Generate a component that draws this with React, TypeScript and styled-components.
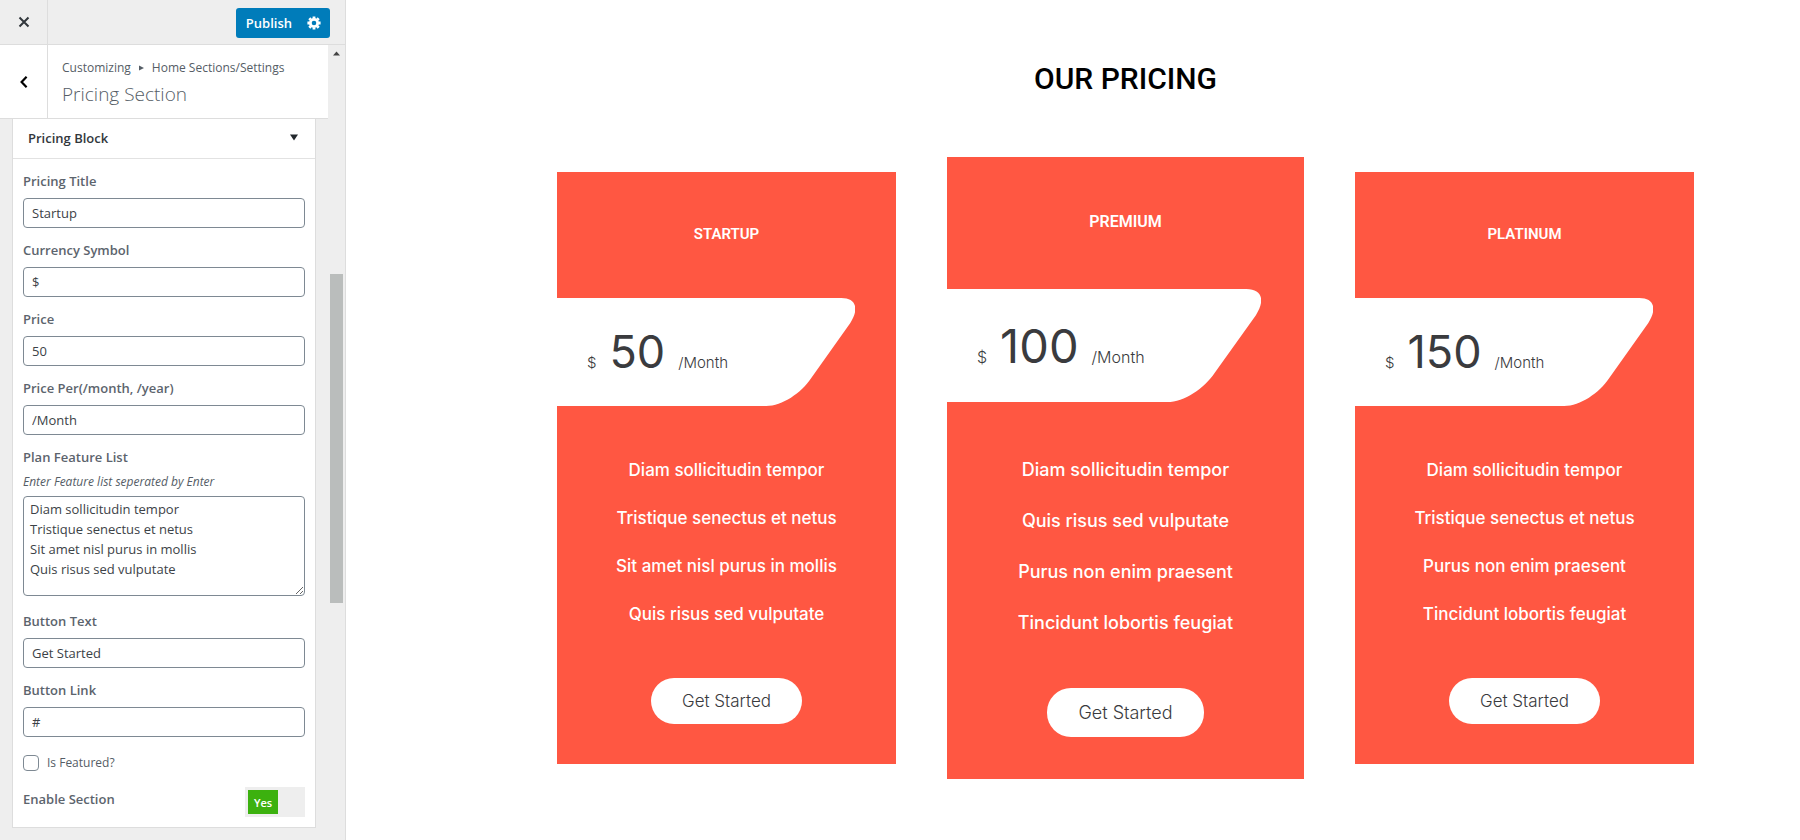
import React, { useState } from 'react';
import styled, { createGlobalStyle, css } from 'styled-components';

const GlobalStyle = createGlobalStyle`
  *, *::before, *::after { box-sizing: border-box; }
  body { margin: 0; background: #fff; }
  button, input, textarea { font: inherit; }
`;

const Page = styled.div`
  display: flex;
  min-height: 100vh;
`;

const Sidebar = styled.aside`
  flex: 0 0 346px;
  display: flex;
  flex-direction: column;
  background: #eee;
  border-right: 1px solid #ddd;
  font-family: 'Open Sans', 'Noto Sans', sans-serif;
  font-size: 13px;
  color: #555d66;
`;

const TopBar = styled.header`
  display: flex;
  align-items: center;
  justify-content: space-between;
  height: 45px;
  padding-right: 15px;
  border-bottom: 1px solid #ddd;
`;

const IconButton = styled.button`
  display: flex;
  align-items: center;
  justify-content: center;
  align-self: stretch;
  width: 48px;
  padding: 0;
  border: 0;
  border-right: 1px solid #ddd;
  background: transparent;
  color: #32373c;
  cursor: pointer;
`;

const PublishGroup = styled.div`
  display: flex;
  height: 30px;
  margin-top: 1px;
  border-radius: 3px;
  overflow: hidden;
  background: #007cba;
`;

const PublishButton = styled.button`
  display: flex;
  align-items: center;
  border: 0;
  padding: 0 9px 0 10px;
  background: transparent;
  color: #fff;
  font-weight: 600;
  cursor: pointer;
`;

const GearButton = styled(PublishButton)`
  padding: 0 9px 0 6px;
`;

const SidebarBody = styled.div`
  flex: 1;
  display: flex;
`;

const SidebarMain = styled.div`
  flex: 1;
  min-width: 0;
`;

const SectionHead = styled.div`
  display: flex;
  height: 74px;
  background: #fff;
  border-bottom: 1px solid #ddd;
`;

const HeadText = styled.div`
  display: flex;
  flex-direction: column;
  justify-content: center;
  padding: 2px 0 0 14px;
`;

const Crumbs = styled.div`
  display: flex;
  align-items: center;
  gap: 8px;
  font-size: 12px;
  line-height: 20px;
`;

const HeadTitle = styled.h1`
  margin: 2px 0 0;
  font-size: 19px;
  font-weight: 300;
  line-height: 28px;
`;

const Panel = styled.section`
  margin: 0 12px 12px;
  border: 1px solid #ddd;
  border-top: 0;
  background: #fff;
`;

const PanelToggle = styled.button`
  display: flex;
  align-items: center;
  justify-content: space-between;
  width: 100%;
  height: 40px;
  padding: 0 17px 2px 15px;
  border: 0;
  border-bottom: 1px solid #e2e2e2;
  background: #fff;
  color: #32373c;
  font-weight: 600;
  cursor: pointer;
`;

const Fields = styled.div`
  display: flex;
  flex-direction: column;
  gap: 12px;
  padding: 12px 10px 10px;
`;

const Field = styled.div<{ $roomy?: boolean }>`
  display: flex;
  flex-direction: column;
  padding-bottom: ${p => (p.$roomy ? 3 : 0)}px;
`;

const labelText = css`
  font-weight: 600;
  line-height: 20px;
  color: #5c646d;
`;

const Label = styled.label`
  ${labelText}
`;

const Hint = styled.span`
  margin-top: 5px;
  font-size: 12px;
  font-style: italic;
  line-height: 20px;
`;

const inputBox = css`
  width: 100%;
  border: 1px solid #7e8993;
  border-radius: 4px;
  background: #fff;
  color: #3c4247;
`;

const TextInput = styled.input`
  ${inputBox}
  height: 30px;
  margin-top: 7px;
  padding: 0 8px;
`;

const TextArea = styled.textarea`
  ${inputBox}
  display: block;
  height: 100px;
  margin-top: 4px;
  padding: 2px 6px;
  line-height: 20px;
  resize: vertical;
`;

const CheckRow = styled.label`
  display: flex;
  align-items: center;
  gap: 8px;
  padding: 3px 0 1px;
  font-size: 12px;
  line-height: 22px;
`;

const CheckBox = styled.input`
  appearance: none;
  width: 16px;
  height: 16px;
  margin: 0;
  border: 1px solid #7e8993;
  border-radius: 4px;
  background: #fff;
  &:checked { background: #007cba; }
`;

const SwitchRow = styled.div`
  display: flex;
  align-items: center;
  justify-content: space-between;
`;

const SwitchLabel = styled.label`
  ${labelText}
  padding-bottom: 6px;
`;

const Switch = styled.span<{ $on: boolean }>`
  position: relative;
  display: flex;
  justify-content: ${p => (p.$on ? 'flex-start' : 'flex-end')};
  width: 60px;
  height: 30px;
  padding: 3px;
  background: #eee;
`;

const SwitchInput = styled.input`
  position: absolute;
  inset: 0;
  width: 100%;
  height: 100%;
  margin: 0;
  appearance: none;
  cursor: pointer;
`;

const Knob = styled.span<{ $on: boolean }>`
  width: 30px;
  background: ${p => (p.$on ? '#3cb10f' : '#999')};
  color: #fff;
  font-size: 11px;
  font-weight: 600;
  line-height: 25px;
  text-align: center;
`;

const ScrollRail = styled.div`
  flex: 0 0 17px;
  display: flex;
  flex-direction: column;
  align-items: center;
  padding: 6px 2px 0;
`;

const ScrollThumb = styled.div`
  width: 13px;
  flex: 0 0 329px;
  margin-top: 218px;
  background: #babdbc;
`;

const Preview = styled.main`
  flex: 1;
  min-width: 0;
  padding: 58px 106px 40px 211px;
  font-family: Inter, 'Open Sans', sans-serif;
`;

const PreviewTitle = styled.h2`
  margin: 0 0 58px;
  font-family: Roboto, sans-serif;
  font-size: 30px;
  font-weight: 500;
  line-height: 41px;
  text-align: center;
  text-transform: uppercase;
  color: #000;
`;

const Cards = styled.div`
  display: grid;
  grid-template-columns: 339fr 357fr 339fr;
  gap: 51px;
  align-items: center;
`;

const Card = styled.article<{ $featured: boolean }>`
  display: flex;
  flex-direction: column;
  padding-bottom: ${p => (p.$featured ? 42 : 40)}px;
  background: #ff5742;
  color: #fff;
`;

const CardTitle = styled.h3<{ $featured: boolean }>`
  margin: 0;
  padding: ${p => (p.$featured ? '53px 0 55px' : '50px 0 52px')};
  font-family: Roboto, sans-serif;
  font-size: ${p => (p.$featured ? 16 : 15)}px;
  font-weight: 600;
  line-height: 24px;
  text-align: center;
  text-transform: uppercase;
`;

const Ribbon = styled.div<{ $featured: boolean }>`
  position: relative;
  display: flex;
  align-items: center;
  width: 88%;
  height: ${p => (p.$featured ? 113 : 108)}px;
  padding-left: 30px;
`;

const RibbonShape = styled.svg`
  position: absolute;
  inset: 0;
  width: 100%;
  height: 100%;
`;

const Price = styled.div<{ $featured: boolean }>`
  position: relative;
  display: flex;
  align-items: baseline;
  gap: 13px;
  font-size: ${p => (p.$featured ? 16 : 15)}px;
  font-weight: 300;
  color: #3a3b3e;
`;

const Amount = styled.span<{ $featured: boolean }>`
  font-size: ${p => (p.$featured ? 47 : 45)}px;
  font-weight: 400;
  line-height: 56px;
`;

const Features = styled.ul<{ $featured: boolean }>`
  margin: ${p => (p.$featured ? '42px 0 40px' : '40px 0')};
  padding: 0;
  list-style: none;
  font-size: ${p => (p.$featured ? 18 : 17)}px;
  font-weight: 500;
  line-height: ${p => (p.$featured ? 51 : 48)}px;
  text-align: center;
`;

const CardButton = styled.a<{ $featured: boolean }>`
  align-self: center;
  padding: 0 31px;
  border-radius: 24px;
  background: #fff;
  color: #3a3b3e;
  font-size: ${p => (p.$featured ? 18 : 17)}px;
  font-weight: 300;
  line-height: ${p => (p.$featured ? 49 : 46)}px;
  text-decoration: none;
`;

type Plan = { title: string; price: string; features: string[]; featured?: boolean };

const plans: Plan[] = [
  {
    title: 'Startup',
    price: '50',
    features: ['Diam sollicitudin tempor', 'Tristique senectus et netus', 'Sit amet nisl purus in mollis', 'Quis risus sed vulputate'],
  },
  {
    title: 'Premium',
    price: '100',
    featured: true,
    features: ['Diam sollicitudin tempor', 'Quis risus sed vulputate', 'Purus non enim praesent', 'Tincidunt lobortis feugiat'],
  },
  {
    title: 'Platinum',
    price: '150',
    features: ['Diam sollicitudin tempor', 'Tristique senectus et netus', 'Purus non enim praesent', 'Tincidunt lobortis feugiat'],
  },
];

function PlanCard({ plan }: { plan: Plan }) {
  const f = !!plan.featured;
  return (
    <Card $featured={f}>
      <CardTitle $featured={f}>{plan.title}</CardTitle>
      <Ribbon $featured={f}>
        <RibbonShape viewBox="0 0 298 108" preserveAspectRatio="none" aria-hidden="true">
          <path fill="#fff" d="M0 0H284C299 0 302 11 293 25L254 80C244 95 225 108 209 108H0Z" />
        </RibbonShape>
        <Price $featured={f}>
          <span>$</span>
          <Amount $featured={f}>{plan.price}</Amount>
          <span>/Month</span>
        </Price>
      </Ribbon>
      <Features $featured={f}>
        {plan.features.map(text => <li key={text}>{text}</li>)}
      </Features>
      <CardButton $featured={f} href="#">Get Started</CardButton>
    </Card>
  );
}

function TextField({ id, label, value }: { id: string; label: string; value: string }) {
  return (
    <Field>
      <Label htmlFor={id}>{label}</Label>
      <TextInput id={id} type="text" defaultValue={value} />
    </Field>
  );
}

const featureText = plans[0].features.join('\n');

export default function App() {
  const [enabled, setEnabled] = useState(true);
  return (
    <Page>
      <GlobalStyle />
      <Sidebar>
        <TopBar>
          <IconButton aria-label="Close">
            <svg width="12" height="12" viewBox="0 0 12 12" fill="none" stroke="currentColor" strokeWidth="2">
              <path d="M1.5 1.5l9 9M10.5 1.5l-9 9" />
            </svg>
          </IconButton>
          <PublishGroup>
            <PublishButton>Publish</PublishButton>
            <GearButton aria-label="Publish settings">
              <svg width="14" height="14" viewBox="0 0 14 14" fill="none" stroke="#fff">
                <circle cx="7" cy="7" r="3.7" strokeWidth="2.8" />
                <path strokeWidth="2.8" d="M7 .4v2M7 11.6v2M.4 7h2M11.6 7h2M2.3 2.3l1.4 1.4M10.3 10.3l1.4 1.4M11.7 2.3l-1.4 1.4M3.7 10.3l-1.4 1.4" />
              </svg>
            </GearButton>
          </PublishGroup>
        </TopBar>
        <SidebarBody>
          <SidebarMain>
            <SectionHead>
              <IconButton aria-label="Back">
                <svg width="8" height="12" viewBox="0 0 8 12" fill="none" stroke="#000" strokeWidth="2.2">
                  <path d="M6.6 .8L1.6 6L6.6 11.2" />
                </svg>
              </IconButton>
              <HeadText>
                <Crumbs>
                  <span>Customizing</span>
                  <svg width="5" height="6" viewBox="0 0 5 6" aria-hidden="true"><path fill="#555d66" d="M0 0.5L5 3L0 5.5Z" /></svg>
                  <span>Home Sections/Settings</span>
                </Crumbs>
                <HeadTitle>Pricing Section</HeadTitle>
              </HeadText>
            </SectionHead>
            <Panel>
              <PanelToggle>
                Pricing Block
                <svg width="8" height="7" viewBox="0 0 8 7" aria-hidden="true"><path fill="#23282d" d="M0 .5H8L4 6.5Z" /></svg>
              </PanelToggle>
              <Fields>
                <TextField id="title" label="Pricing Title" value="Startup" />
                <TextField id="currency" label="Currency Symbol" value="$" />
                <TextField id="price" label="Price" value="50" />
                <TextField id="per" label="Price Per(/month, /year)" value="/Month" />
                <Field $roomy>
                  <Label htmlFor="features">Plan Feature List</Label>
                  <Hint>Enter Feature list seperated by Enter</Hint>
                  <TextArea id="features" defaultValue={featureText} />
                </Field>
                <TextField id="button-text" label="Button Text" value="Get Started" />
                <TextField id="button-link" label="Button Link" value="#" />
                <CheckRow>
                  <CheckBox type="checkbox" />
                  Is Featured?
                </CheckRow>
                <SwitchRow>
                  <SwitchLabel htmlFor="enable">Enable Section</SwitchLabel>
                  <Switch $on={enabled}>
                    <SwitchInput id="enable" type="checkbox" checked={enabled} onChange={e => setEnabled(e.target.checked)} />
                    <Knob $on={enabled}>{enabled ? 'Yes' : 'No'}</Knob>
                  </Switch>
                </SwitchRow>
              </Fields>
            </Panel>
          </SidebarMain>
          <ScrollRail aria-hidden="true">
            <svg width="7" height="5" viewBox="0 0 7 5"><path fill="#444" d="M0 4.5L3.5 .5L7 4.5Z" /></svg>
            <ScrollThumb />
          </ScrollRail>
        </SidebarBody>
      </Sidebar>
      <Preview>
        <PreviewTitle>Our Pricing</PreviewTitle>
        <Cards>
          {plans.map(plan => <PlanCard key={plan.title} plan={plan} />)}
        </Cards>
      </Preview>
    </Page>
  );
}
